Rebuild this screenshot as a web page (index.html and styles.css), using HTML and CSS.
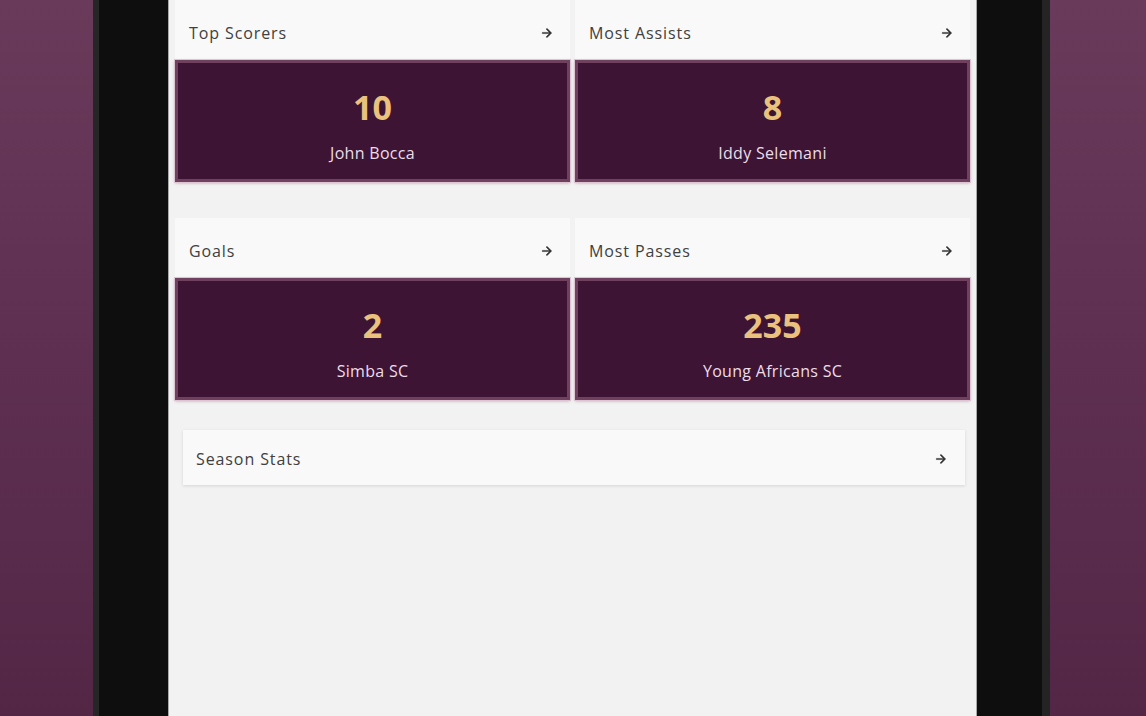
FILE: index.html
```html
<!DOCTYPE html>
<html lang="en">
<head>
<meta charset="utf-8">
<title>Stats</title>
<link rel="stylesheet" href="styles.css">
</head>
<body>
<div class="stage">
  <div class="tablet">
    <div class="screen">
      <div class="grid">
        <section class="stat">
          <div class="stat-head"><span>Top Scorers</span>
            <svg class="arrow" viewBox="0 0 24 24"><path d="M12 4l-1.41 1.41L16.17 11H4v2h12.17l-5.58 5.59L12 20l8-8z"/></svg>
          </div>
          <div class="stat-box"><div class="num">10</div><div class="name">John Bocca</div></div>
        </section>
        <section class="stat">
          <div class="stat-head"><span>Most Assists</span>
            <svg class="arrow" viewBox="0 0 24 24"><path d="M12 4l-1.41 1.41L16.17 11H4v2h12.17l-5.58 5.59L12 20l8-8z"/></svg>
          </div>
          <div class="stat-box"><div class="num">8</div><div class="name">Iddy Selemani</div></div>
        </section>
        <section class="stat">
          <div class="stat-head"><span>Goals</span>
            <svg class="arrow" viewBox="0 0 24 24"><path d="M12 4l-1.41 1.41L16.17 11H4v2h12.17l-5.58 5.59L12 20l8-8z"/></svg>
          </div>
          <div class="stat-box"><div class="num">2</div><div class="name">Simba SC</div></div>
        </section>
        <section class="stat">
          <div class="stat-head"><span>Most Passes</span>
            <svg class="arrow" viewBox="0 0 24 24"><path d="M12 4l-1.41 1.41L16.17 11H4v2h12.17l-5.58 5.59L12 20l8-8z"/></svg>
          </div>
          <div class="stat-box"><div class="num">235</div><div class="name">Young Africans SC</div></div>
        </section>
      </div>
      <div class="season">
        <span>Season Stats</span>
        <svg class="arrow" viewBox="0 0 24 24"><path d="M12 4l-1.41 1.41L16.17 11H4v2h12.17l-5.58 5.59L12 20l8-8z"/></svg>
      </div>
    </div>
  </div>
</div>
</body>
</html>
```
FILE: styles.css
```css
* { box-sizing: border-box; }
html, body {
  margin: 0;
  width: 1146px;
  height: 716px;
  overflow: hidden;
}
body {
  background: linear-gradient(180deg, #6a3a5b 0%, #5e2f51 50%, #532646 100%);
  font-family: "Open Sans", "Noto Sans", "Liberation Sans", sans-serif;
}
.stage {
  display: flex;
  height: 716px;
  padding-left: 93px;
}
.tablet {
  width: 957px;
  height: 716px;
  background: #0e0e0e;
  border-left: 6px solid #262626;
  border-right: 8px solid #242424;
  padding: 0 65px 0 69px;
  display: flex;
}
.screen {
  width: 809px;
  height: 716px;
  background: #f2f2f2;
  border-left: 1px solid #a8a8a8;
  border-right: 1px solid #a8a8a8;
  padding: 0 6px;
}
.grid {
  display: grid;
  grid-template-columns: 395px 395px;
  column-gap: 5px;
  row-gap: 36px;
}
.stat {
  display: flex;
  flex-direction: column;
}
.stat-head {
  height: 60px;
  background: #f9f9f9;
  display: flex;
  align-items: center;
  justify-content: space-between;
  padding: 6px 16px 0 14px;
  font-size: 16px;
  letter-spacing: 0.9px;
  color: #404040;
}
.arrow {
  width: 14px;
  height: 14px;
  fill: #2e2e2e;
  stroke: #2e2e2e;
  stroke-width: 0.8;
}
.stat-box {
  height: 122px;
  background: #3e1435;
  border: 3px solid #70405f;
  box-shadow: 0 0 0 1px #dcc4d2, 0 1px 3px rgba(60, 20, 50, 0.35);
  display: flex;
  flex-direction: column;
  align-items: center;
  padding-top: 24px;
}
.num {
  font-size: 34px;
  line-height: 40px;
  font-weight: 700;
  color: #eac27d;
}
.name {
  margin-top: 16px;
  font-size: 16px;
  line-height: 20px;
  letter-spacing: 0.3px;
  color: #ecdde8;
}
.season {
  margin: 30px 5px 0 8px;
  height: 55px;
  background: #f9f9f9;
  box-shadow: 0 1px 3px rgba(0, 0, 0, 0.12);
  display: flex;
  align-items: center;
  justify-content: space-between;
  padding: 2px 17px 0 13px;
  font-size: 16px;
  letter-spacing: 0.9px;
  color: #404040;
}
```
